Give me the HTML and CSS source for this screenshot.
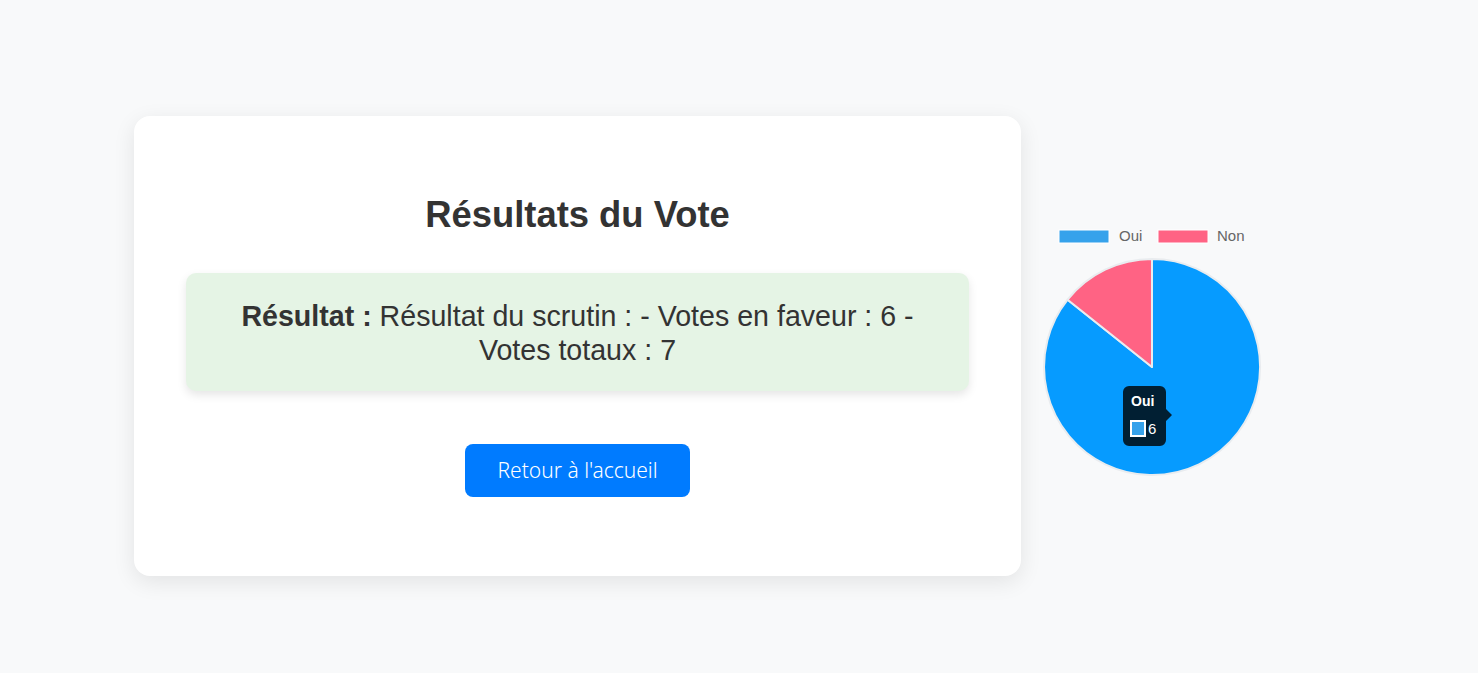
FILE: index.html
```html
<!DOCTYPE html>
<html lang="fr">
<head>
<meta charset="utf-8">
<title>Résultats du Vote</title>
<link rel="stylesheet" href="styles.css">
</head>
<body>
<div class="page">
  <div class="card">
    <h1 class="title">Résultats du Vote</h1>
    <div class="result">
      <strong>Résultat :</strong> Résultat du scrutin : - Votes en faveur : 6 - Votes totaux : 7
    </div>
    <div class="actions">
      <a class="btn" href="#">Retour à l'accueil</a>
    </div>
  </div>
  <div class="chart">
    <svg width="240" height="262" viewBox="0 0 240 262" xmlns="http://www.w3.org/2000/svg">
      <rect x="19" y="10" width="50" height="13" fill="#36a2eb" stroke="#fff" stroke-width="1"/>
      <text x="79" y="21" class="legend-text">Oui</text>
      <rect x="118" y="10" width="50" height="13" fill="#ff6384" stroke="#fff" stroke-width="1"/>
      <text x="177" y="21" class="legend-text">Non</text>
      <path d="M112,147 L112,39 A108,108 0 1,1 27.6,79.7 Z" fill="#069bff" stroke="#e9ecef" stroke-width="2" stroke-linejoin="round"/>
      <path d="M112,147 L27.6,79.7 A108,108 0 0,1 112,39 Z" fill="#ff6384" stroke="#e9ecef" stroke-width="2" stroke-linejoin="round"/>
      <path d="M89,166 H120 A6,6 0 0 1 126,172 V189 L132,195 L126,201 V220 A6,6 0 0 1 120,226 H89 A6,6 0 0 1 83,220 V172 A6,6 0 0 1 89,166 Z" fill="rgba(0,0,0,0.8)"/>
      <text x="91" y="186" class="tip-title">Oui</text>
      <rect x="91" y="201" width="14" height="15" fill="#36a2eb" stroke="#fff" stroke-width="2"/>
      <text x="108" y="214" class="tip-body">6</text>
    </svg>
  </div>
</div>
</body>
</html>
```
FILE: styles.css
```css
html, body {
  margin: 0;
  padding: 0;
}
body {
  background: #f8f9fa;
  font-family: "Liberation Sans", Arial, sans-serif;
  color: #333;
  height: 673px;
  overflow: hidden;
}
.page {
  display: flex;
  align-items: flex-start;
  padding: 116px 0 0 134px;
}
.card {
  width: 887px;
  height: 460px;
  box-sizing: border-box;
  background: #fff;
  border-radius: 16px;
  box-shadow: 0 6px 22px rgba(0, 0, 0, 0.09);
  padding: 78px 52px 0;
  display: flex;
  flex-direction: column;
}
.title {
  margin: 0;
  font-size: 36.4px;
  line-height: 41px;
  font-weight: bold;
  text-align: center;
  color: #333;
}
.result {
  margin-top: 38px;
  background: #e5f4e5;
  border-radius: 10px;
  box-shadow: 0 4px 10px rgba(0, 0, 0, 0.1);
  padding: 26px 40px 24px;
  font-size: 28.6px;
  line-height: 34px;
  text-align: center;
  color: #333;
}
.result strong {
  font-weight: bold;
}
.actions {
  display: flex;
  justify-content: center;
  margin-top: 53px;
}
.btn {
  display: flex;
  align-items: center;
  justify-content: center;
  width: 225px;
  height: 53px;
  background: #007bff;
  color: #fff;
  border-radius: 8px;
  text-decoration: none;
  font-family: "Noto Sans", "Open Sans", sans-serif;
  font-size: 21px;
  font-weight: 300;
  padding-bottom: 2px;
  box-sizing: border-box;
}
.chart {
  margin: 104px 0 0 19px;
  width: 240px;
}
.chart svg {
  display: block;
}
.legend-text {
  font-family: "Liberation Sans", Arial, sans-serif;
  font-size: 15px;
  fill: #666;
}
.tip-title {
  font-family: "Liberation Sans", Arial, sans-serif;
  font-size: 14px;
  font-weight: bold;
  fill: #fff;
}
.tip-body {
  font-family: "Liberation Sans", Arial, sans-serif;
  font-size: 15px;
  fill: #fff;
}
```
